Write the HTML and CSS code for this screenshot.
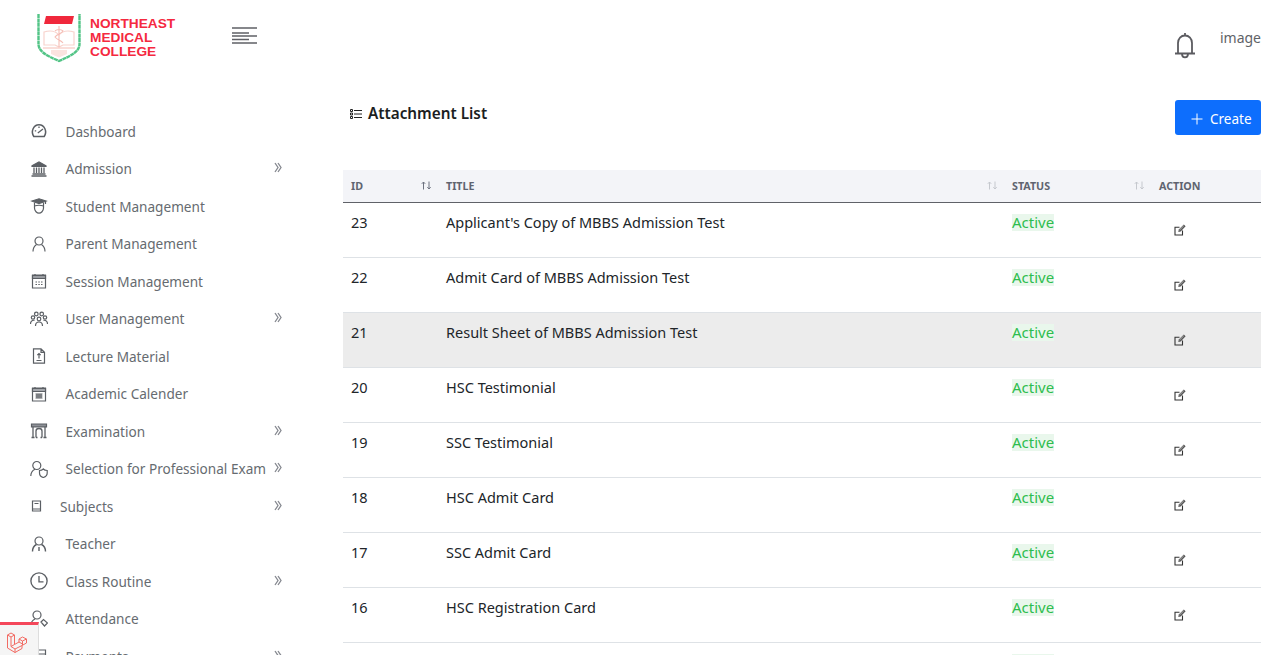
FILE: index.html
```html
<!DOCTYPE html>
<html lang="en">
<head>
<meta charset="utf-8">
<title>Attachment List</title>
<link rel="stylesheet" href="styles.css">
</head>
<body>
<svg class="defs" width="0" height="0" aria-hidden="true">
  <symbol id="chev" viewBox="0 0 8 11"><path d="M1 1L4 5.500L1 10M4 1L7 5.500L4 10"/></symbol>
  <symbol id="edit" viewBox="0 0 12 12"><path d="M8.500 6.500V11H1V3.200H5.500" fill="none" stroke="#333" stroke-width="1.100"/><path d="M4.300 8L4.800 5.500L9.800 0.600L11.600 2.200L6.700 7.400Z" fill="#555"/><path d="M5.500 6L9.800 1.800" stroke="#eee" stroke-width=".6"/></symbol>
  <symbol id="sort" viewBox="0 0 11 9"><path d="M2.500 8.500V1M0.800 2.800L2.500 1L4.200 2.800M8 0.500V8M6.300 6.200L8 8L9.700 6.200"/></symbol>
</svg>
<div class="page">
  <aside class="sidebar">
    <div class="brand">
      <svg class="crest" viewBox="0 0 46 50" width="46" height="50">
        <path d="M2.500 1V31C2.500 38 9 42 23 48C37 42 43.500 38 43.500 31V1" fill="none" stroke="#52c486" stroke-width="2.400" stroke-dasharray="4 .4"/>
        <path d="M10 3H38L36 11H8Z" fill="#f0283c"/>
        <path d="M8 19C14 17 20 18 23 22C26 18 32 17 38 19V32H27L23 34L19 32H8Z" fill="#fff" stroke="#f8d3cd" stroke-width="1.200"/>
        <path d="M7 35H39M23 13V34M19 18C21 16 25 16 27 18C25 21 21 21 19 24C21 27 25 27 27 30" fill="none" stroke="#f5bdb5" stroke-width="1.100"/>
        <path d="M15 37H31V41L23 44.500L15 41Z" fill="#fbe3df"/>
      </svg>
      <div class="brand-name">NORTHEAST<br>MEDICAL<br>COLLEGE</div>
      <svg class="burger" viewBox="0 0 25 17" width="25" height="17">
        <path d="M0 1H25M0 6H17M0 9H25M0 12.500H17M0 16H25" stroke="#5f6066" stroke-width="1.500"/>
      </svg>
    </div>
    <nav class="menu">
      <a class="item"><svg class="ico" viewBox="0 0 16 16"><path d="M2.800 13.500C-0.500 8.500 2.500 1.800 8 1.800C13.500 1.800 16.500 8.500 13.200 13.500Z" stroke-width="1.500"/><path d="M6.800 10L12 6M8 3.500V5M3.800 7.800H5.200" stroke-width="1.300"/></svg><span class="label">Dashboard</span></a>
      <a class="item"><svg class="ico" viewBox="0 0 16 16"><path d="M1 4.800L8 1L15 4.800V5.500H1Z" fill="#5b5f64"/><path d="M3 6.500V12M5.500 6.500V12M8 6.500V12M10.500 6.500V12M13 6.500V12" stroke-width="1.300"/><path d="M1.500 13H14.500M0.500 15H15.500" stroke-width="1.300"/></svg><span class="label">Admission</span><svg class="chev"><use href="#chev"/></svg></a>
      <a class="item"><svg class="ico" viewBox="0 0 16 16"><path d="M1 3L8 0.800L15 3L8 5.500Z" fill="#5b5f64"/><path d="M3.500 4.500V10C3.500 13 6 15.200 8 15.200C10 15.200 12.500 13 12.500 10V4.500M3.500 8C7 6.800 9 6.800 12.500 8M14.500 3V6"/></svg><span class="label">Student Management</span></a>
      <a class="item"><svg class="ico" viewBox="0 0 16 16"><circle cx="8" cy="5" r="4"/><path d="M2 15.500C2 11.500 4 9.500 5.500 8.500M14 15.500C14 11.500 12 9.500 10.500 8.500"/></svg><span class="label">Parent Management</span></a>
      <a class="item"><svg class="ico" viewBox="0 0 16 16"><path d="M1.500 2H14.500V15H1.500ZM4 1V3M12 1V3M4.500 9H6M7.300 9H8.800M10 9H11.500M4.500 11.500H6M7.300 11.500H8.800M10 11.500H11.500"/><path d="M1.500 2.500H14.500V5.500H1.500Z" fill="#9a9da2"/></svg><span class="label">Session Management</span></a>
      <a class="item"><svg class="ico" viewBox="0 0 18 15"><circle cx="6.300" cy="2.500" r="1.800"/><circle cx="11.700" cy="2.500" r="1.800"/><circle cx="9" cy="7.500" r="1.800"/><circle cx="3" cy="6" r="1.700"/><circle cx="15" cy="6" r="1.700"/><path d="M5.500 14.500C5.500 12 7 10.500 9 10.500C11 10.500 12.500 12 12.500 14.500M0.500 12.500C0.500 10 2 8.500 4.500 8.800M17.500 12.500C17.500 10 16 8.500 13.500 8.800"/></svg><span class="label">User Management</span><svg class="chev"><use href="#chev"/></svg></a>
      <a class="item"><svg class="ico" viewBox="0 0 16 16"><path d="M2.500 0.800H10L13.500 4.300V15.200H2.500ZM10 0.800V4.300H13.500M8 5.500V10.500M6.300 7.200L8 5.500L9.700 7.200M5.500 12.500H10.500"/></svg><span class="label">Lecture Material</span></a>
      <a class="item"><svg class="ico" viewBox="0 0 16 16"><path d="M1.500 2H14.500V15H1.500ZM4 1V3M12 1V3M4.500 8H11.500M4.500 10H11.500M4.500 12H11.500M6 7.500V12.500M8 7.500V12.500M10 7.500V12.500"/><path d="M1.500 2.500H14.500V5.500H1.500Z" fill="#a5a8ad"/></svg><span class="label">Academic Calender</span></a>
      <a class="item"><svg class="ico" viewBox="0 0 16 16"><path d="M0.500 1H15.500V3.800H0.500Z" fill="#8d9096"/><path d="M2 3.800V14.500M14 3.800V14.500M0.500 14.500H3.500M12.500 14.500H15.500M5 14.500V8C5 6 6.500 5.500 8 5.500C9.500 5.500 11 6 11 8V14.500M5 14.500H6.500M9.500 14.500H11" stroke-width="1.300"/></svg><span class="label">Examination</span><svg class="chev"><use href="#chev"/></svg></a>
      <a class="item"><svg class="ico ico-large" viewBox="0 0 18 18"><circle cx="6.800" cy="5.500" r="4"/><path d="M0.800 16C0.800 12.500 3 10.300 5 9.300M9.500 10.500C11.500 10.500 12.500 9.800 13.300 9C14 9.800 15.500 10.500 17.200 10.500V13C17.200 15.500 15 17 13.300 17.500C11.500 17 9.500 15.500 9.500 13Z"/></svg><span class="label">Selection for Professional Exam</span><svg class="chev"><use href="#chev"/></svg></a>
      <a class="item item-small"><svg class="ico ico-small" viewBox="0 0 10 12"><path d="M1 1H9V11H1ZM1 9H9M3 3.500H7"/></svg><span class="label">Subjects</span><svg class="chev"><use href="#chev"/></svg></a>
      <a class="item"><svg class="ico" viewBox="0 0 16 16"><circle cx="8" cy="5" r="4"/><path d="M1.500 15.500C1.500 11.500 3.500 9.500 5.500 8.500M14.500 15.500C14.500 11.500 12.500 9.500 10.500 8.500M8 11V15" stroke-width="1.400"/></svg><span class="label">Teacher</span></a>
      <a class="item"><svg class="ico ico-large" viewBox="0 0 16 16"><circle cx="8" cy="8" r="7.200"/><path d="M8 3.500V8.800H12"/></svg><span class="label">Class Routine</span><svg class="chev"><use href="#chev"/></svg></a>
      <a class="item"><svg class="ico ico-large" viewBox="0 0 18 18"><circle cx="7" cy="5" r="4"/><path d="M1 15C1 12 3 10 5 9M11 12L13.500 9.500L17.500 13L14.500 16Z"/></svg><span class="label">Attendance</span></a>
      <a class="item"><svg class="ico" viewBox="0 0 16 16"><path d="M1.500 2H14.500V14.500H1.500ZM1.500 6H14.500"/></svg><span class="label">Payments</span><svg class="chev"><use href="#chev"/></svg></a>
    </nav>
  </aside>
  <main class="main">
    <header class="topbar">
      <svg class="bell" viewBox="0 0 24 28" width="24" height="28"><path d="M5 21V11C5 6.500 8 3.500 12 3.500C16 3.500 19 6.500 19 11V21M2 21.500H22M12 1V3.500M9 22C9 26.500 15 26.500 15 22"/></svg>
      <span class="avatar">image</span>
    </header>
    <section class="head">
      <h1 class="title"><svg class="list-ico" viewBox="0 0 12 10" width="12" height="10"><path d="M4 1.500H12M4 5H12M4 8.500H12"/><path d="M0.500 0.500H2.500V2.500H0.500ZM0.500 4H2.500V6H0.500ZM0.500 7.500H2.500V9.500H0.500Z"/></svg>Attachment List</h1>
      <button class="create"><svg viewBox="0 0 12 12" width="12" height="12"><path d="M6 0.500V11.500M0.500 6H11.500"/></svg>Create</button>
    </section>
    <table class="grid">
      <colgroup><col class="c-id"><col class="c-title"><col class="c-status"><col class="c-action"></colgroup>
      <thead><tr>
        <th><span class="th">ID<svg class="sort sort-down"><use href="#sort"/></svg></span></th>
        <th><span class="th">TITLE<svg class="sort"><use href="#sort"/></svg></span></th>
        <th><span class="th">STATUS<svg class="sort"><use href="#sort"/></svg></span></th>
        <th><span class="th">ACTION</span></th>
      </tr></thead>
      <tbody>
        <tr><td>23</td><td>Applicant's Copy of MBBS Admission Test</td><td><span class="active">Active</span></td><td class="act"><svg><use href="#edit"/></svg></td></tr>
        <tr><td>22</td><td>Admit Card of MBBS Admission Test</td><td><span class="active">Active</span></td><td class="act"><svg><use href="#edit"/></svg></td></tr>
        <tr class="hover"><td>21</td><td>Result Sheet of MBBS Admission Test</td><td><span class="active">Active</span></td><td class="act"><svg><use href="#edit"/></svg></td></tr>
        <tr><td>20</td><td>HSC Testimonial</td><td><span class="active">Active</span></td><td class="act"><svg><use href="#edit"/></svg></td></tr>
        <tr><td>19</td><td>SSC Testimonial</td><td><span class="active">Active</span></td><td class="act"><svg><use href="#edit"/></svg></td></tr>
        <tr><td>18</td><td>HSC Admit Card</td><td><span class="active">Active</span></td><td class="act"><svg><use href="#edit"/></svg></td></tr>
        <tr><td>17</td><td>SSC Admit Card</td><td><span class="active">Active</span></td><td class="act"><svg><use href="#edit"/></svg></td></tr>
        <tr><td>16</td><td>HSC Registration Card</td><td><span class="active">Active</span></td><td class="act"><svg><use href="#edit"/></svg></td></tr>
        <tr><td>15</td><td>SSC Registration Card</td><td><span class="active">Active</span></td><td class="act"></td></tr>
      </tbody>
    </table>
  </main>
</div>
<div class="debugbar"><svg viewBox="0 0 22 21" width="22" height="21"><path d="M0.500 3L4 1L7.500 3V12.500L12 10V7L15.500 5L19.500 7V11L15 13.500V16.500L8 20.500L0.500 16Z"/><path d="M0.500 3L4 5L7.500 3M4 5V14.500L8 17V20.500M4 14.500L7.500 12.500M8 17L15 13.500M12 7L15.500 9L19.500 7M15.500 9V13M12 10L15.500 12"/></svg></div>
</body>
</html>
```
FILE: styles.css
```css
* { box-sizing: border-box; }
html, body { margin: 0; height: 655px; overflow: hidden; background: #fff; }
body { font-family: "Noto Sans", "Open Sans", sans-serif; color: #212529; }
.defs { position: absolute; }
.page { display: flex; height: 655px; overflow: hidden; }
.sidebar { width: 343px; flex: none; padding: 13px 0 0 30px; }
.brand { display: flex; align-items: flex-start; height: 99.700px; }
.crest { margin: 0 0 0 6px; flex: none; }
.brand-name { margin: 4px 0 0 8px; width: 142px; font: 700 13.700px/14px "Liberation Sans", sans-serif; color: #f5293f; }
.burger { margin: 14px 0 0 0; flex: none; }
.menu { display: flex; flex-direction: column; }
.item { display: flex; align-items: center; height: 37.500px; font-size: 13.600px; color: #666b70; white-space: nowrap; }
.ico { width: 18px; height: 16px; flex: none; margin-right: 17.500px; fill: none; stroke: #5b5f64; stroke-width: 1.200; }
.ico-large { height: 18px; }
.ico-small { width: 13px; height: 12px; margin-right: 17px; }
.label { width: 208.500px; flex: none; }
.item-small .label { width: 214px; }
.chev { width: 8px; height: 11px; flex: none; margin-top: -2px; fill: none; stroke: #85888f; stroke-width: 1.300; }
.main { flex: 1; min-width: 0; padding-right: 24px; }
.topbar { height: 100px; display: flex; justify-content: flex-end; align-items: flex-start; padding-top: 30px; }
.bell { margin: 2px 1px 0 0; fill: none; stroke: #5b5b60; stroke-width: 1.800; }
.avatar { margin: 0 0 0 22px; font-size: 14px; line-height: 16px; color: #5f6368; }
.head { display: flex; justify-content: space-between; align-items: flex-start; height: 70px; }
.title { display: flex; align-items: center; gap: 6px; margin: 3px 0 0 7px; font-size: 15.300px; line-height: 21px; font-weight: 600; color: #1b1e21; }
.list-ico { fill: none; stroke: #222; stroke-width: 1; }
.create { display: flex; align-items: center; gap: 7px; width: 86px; height: 35px; padding: 2px 0 0 16px; border: 0; border-radius: 3px; background: #0d6efd; color: #fff; font: 13.500px "Noto Sans", sans-serif; }
.create svg { fill: none; stroke: #fff; stroke-width: 1; }
.grid { width: 918px; border-collapse: collapse; table-layout: fixed; font-size: 14.500px; }
.c-id { width: 95px; } .c-title { width: 566px; } .c-status { width: 147px; } .c-action { width: 110px; }
th { height: 32px; padding: 0 6px 0 8px; background: #f3f4f8; border-bottom: 1px solid #5f6268; text-align: left; font-size: 10.700px; font-weight: 700; color: #5f6470; }
.th { display: flex; justify-content: space-between; align-items: center; }
.sort { width: 11px; height: 9px; flex: none; fill: none; stroke: #c5c8ce; stroke-width: 1; }
.sort-down { stroke: #6d7280; }
td { height: 55px; padding: 10px 8px 0; vertical-align: top; border-bottom: 1px solid #dee2e6; line-height: 18px; }
.hover td { background: #ececec; }
.active { display: inline-block; background: #e9f7ec; color: #2ebd4e; line-height: 17px; font-size: 15px; }
.act { padding: 21px 0 0 23px; }
.act svg { display: block; width: 12px; height: 12px; }
.debugbar { position: fixed; left: 0; bottom: 0; width: 39px; height: 33px; padding: 7px 0 0 7px; background: #f5f5f5; border-top: 3px solid #f4475a; border-right: 1px solid #ddd; }
.debugbar svg { display: block; fill: none; stroke: #f26b63; stroke-width: 1; }
```
